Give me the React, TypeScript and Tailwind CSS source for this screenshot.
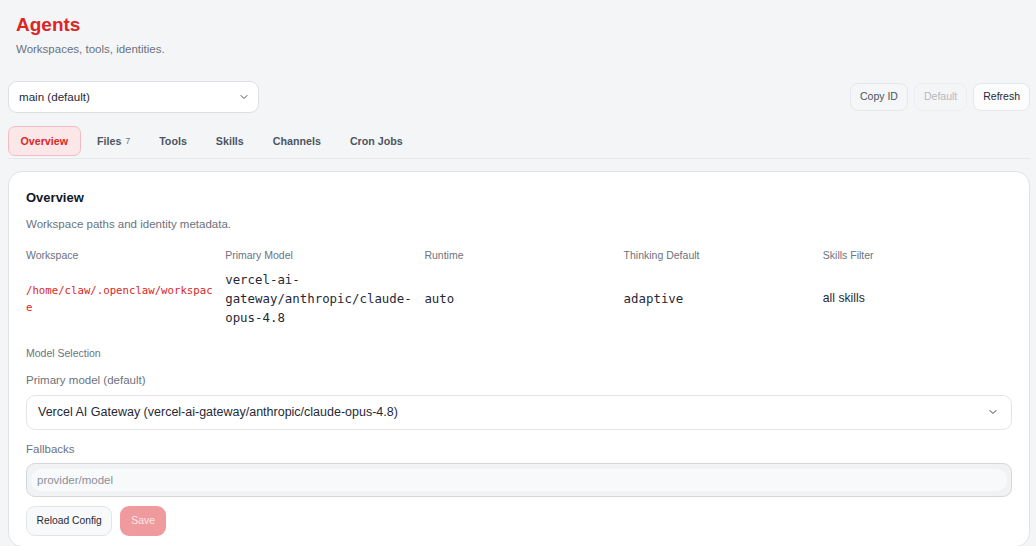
import { ChevronDown } from "lucide-react";

const sans = "font-['Liberation_Sans',Arial,sans-serif]";
const mono = "font-['DejaVu_Sans_Mono','Liberation_Mono',monospace]";

const tabs = [
    { name: "Overview", active: true },
    { name: "Files", count: 7 },
    { name: "Tools" },
    { name: "Skills" },
    { name: "Channels" },
    { name: "Cron Jobs" },
];

export default function App() {
    return (
        <div className={`min-h-screen bg-[#f4f5f7] pl-2 pr-[6px] ${sans}`}>
            <div className="px-2 pt-[13px]">
                <h1 className="text-[19px] leading-[24px] font-bold text-[#dc2626]">Agents</h1>
                <p className="mt-[5px] text-[11.5px] leading-[14px] text-[#6b7280]">Workspaces, tools, identities.</p>
            </div>

            <div className="mt-[25px] flex items-center justify-between">
                <div className="flex h-[32px] w-[251px] items-center justify-between rounded-[9px] border border-[#dcdfe3] bg-white pl-[10px] pr-[8px]">
                    <span className="text-[11.6px] text-[#1f2937]">main (default)</span>
                    <ChevronDown size={12} strokeWidth={2} className="text-[#4b5563]" />
                </div>
                <div className="flex items-center gap-[6px]">
                    <button className="h-[28px] rounded-[8px] border border-[#e5e7eb] bg-[#f5f6f7] px-[9px] text-[10.5px] text-[#4b5563]">Copy ID</button>
                    <button className="h-[28px] rounded-[8px] border border-[#eceef0] bg-[#f4f5f7] px-[9px] text-[10.5px] text-[#b4b8be]">Default</button>
                    <button className="h-[28px] rounded-[8px] border border-[#e5e7eb] bg-[#fcfcfc] px-[9px] text-[10.5px] text-[#1f2937]">Refresh</button>
                </div>
            </div>

            <div className="mt-[13px] flex gap-[4px] border-b border-[#e5e7eb] pb-[2px]">
                {tabs.map((t) => (
                    <div
                        key={t.name}
                        className={
                            t.active
                                ? "flex h-[30px] items-center rounded-[7px] border border-[#f3bcc2] bg-[#fbe6e8] px-[11.5px] text-[10.7px] font-bold text-[#dc2626]"
                                : "flex h-[30px] items-center rounded-[7px] border border-transparent px-[11.5px] text-[10.7px] font-bold text-[#4b5563]"
                        }
                    >
                        {t.name}
                        {t.count !== undefined && (
                            <span className="ml-[4px] text-[8.5px] font-normal text-[#6b7280]">{t.count}</span>
                        )}
                    </div>
                ))}
            </div>

            <div className="mt-[12px] rounded-[14px] border border-[#dfe2e6] bg-white px-[17px] pt-[18px] pb-[10px]">
                <h2 className="text-[13px] leading-[16px] font-bold text-[#111827]">Overview</h2>
                <p className="mt-[11px] text-[11.5px] leading-[14px] text-[#6b7280]">Workspace paths and identity metadata.</p>

                <div className="mt-[18px] grid grid-cols-5 gap-x-[10px]">
                    {["Workspace", "Primary Model", "Runtime", "Thinking Default", "Skills Filter"].map((l) => (
                        <div key={l} className="text-[10.5px] leading-[13px] text-[#6b7280]">{l}</div>
                    ))}
                </div>
                <div className="mt-[8px] grid grid-cols-5 items-center gap-x-[10px]">
                    <div className={`${mono} text-[10.7px] leading-[17.3px] text-[#dc2626] [overflow-wrap:anywhere]`}>/home/claw/.openclaw/workspace</div>
                    <div className={`${mono} text-[12.4px] leading-[19.2px] text-[#1f2937]`}>vercel-ai-gateway/anthropic/claude-opus-4.8</div>
                    <div className={`${mono} text-[12.4px] leading-[19.2px] text-[#1f2937]`}>auto</div>
                    <div className={`${mono} text-[12.4px] leading-[19.2px] text-[#1f2937]`}>adaptive</div>
                    <div className="text-[12.2px] leading-[19px] text-[#1f2937]">all skills</div>
                </div>

                <div className="mt-[19px] text-[10.5px] leading-[13px] text-[#6b7280]">Model Selection</div>
                <div className="mt-[13px] text-[11.5px] leading-[14px] text-[#6b7280]">Primary model (default)</div>
                <div className="mt-[8px] flex h-[35px] items-center justify-between rounded-[9px] border border-[#e2e5e8] bg-white pl-[11px] pr-[12px]">
                    <span className="text-[12.5px] text-[#1f2937]">Vercel AI Gateway (vercel-ai-gateway/anthropic/claude-opus-4.8)</span>
                    <ChevronDown size={12} strokeWidth={2} className="text-[#374151]" />
                </div>
                <div className="mt-[12px] text-[11.5px] leading-[14px] text-[#6b7280]">Fallbacks</div>
                <div className="mt-[7px] flex h-[34px] items-center rounded-[9px] border border-[#d4d7dc] bg-[#f1f2f4] px-[4px]">
                    <input
                        placeholder="provider/model"
                        className="h-[22px] w-full rounded-full bg-[#f8f9fa] px-[6px] text-[11.5px] text-[#1f2937] outline-none placeholder:text-[#8b9099]"
                    />
                </div>
                <div className="mt-[9px] flex gap-[8px]">
                    <button className="h-[30px] rounded-[9px] border border-[#e2e5e8] bg-[#f8f9fa] px-[9.5px] text-[10.3px] text-[#1f2937]">Reload Config</button>
                    <button className="h-[30px] rounded-[9px] bg-[#ef9a9c] px-[11px] text-[10.5px] text-[#fde8e8]">Save</button>
                </div>
            </div>
        </div>
    );
}
